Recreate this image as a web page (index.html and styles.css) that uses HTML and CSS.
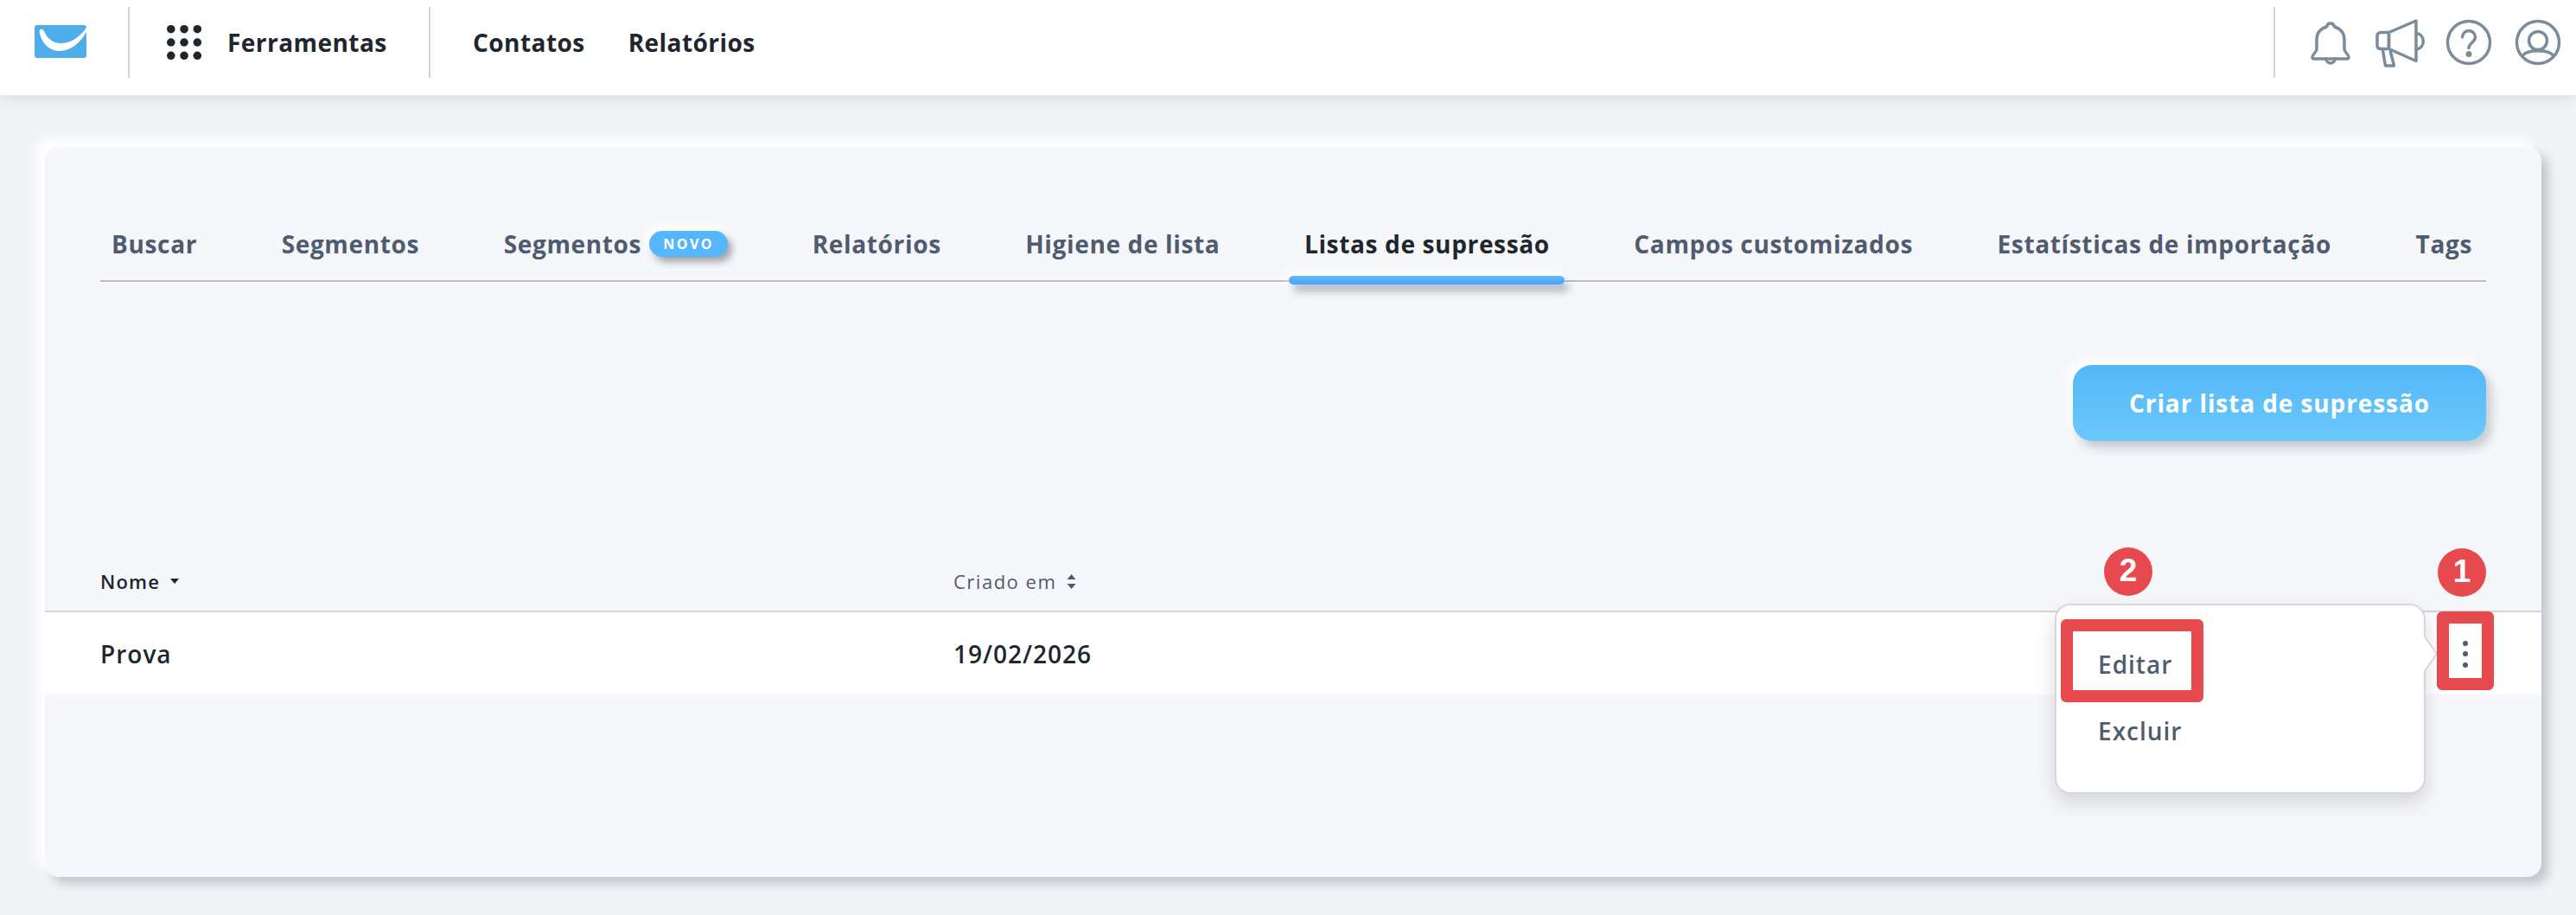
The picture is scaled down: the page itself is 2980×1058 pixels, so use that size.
FILE: index.html
```html
<!DOCTYPE html>
<html lang="pt-BR">
<head>
<meta charset="utf-8">
<title>Listas de supressão</title>
<link rel="stylesheet" href="styles.css">
</head>
<body>
<header class="topbar">
  <a class="logo-cell">
    <svg class="logo" viewBox="0 0 60 38"><rect width="60" height="38" rx="3" fill="#4fadec"/><path d="M5.700 8C8 22 18 30 29 30 42 30 53 20 60 8V3C52 14 42 21 30 21 20 21 14 14 10.700 6.500 9 3.500 5 4.500 5.700 8Z" fill="#fff"/></svg>
  </a>
  <div class="tools-cell">
    <svg class="grid-icon" viewBox="0 0 44 42"><g fill="#20262e"><circle cx="5" cy="5" r="5"/><circle cx="21" cy="5" r="5"/><circle cx="37" cy="5" r="5"/><circle cx="5" cy="21" r="5"/><circle cx="21" cy="21" r="5"/><circle cx="37" cy="21" r="5"/><circle cx="5" cy="37" r="5"/><circle cx="21" cy="37" r="5"/><circle cx="37" cy="37" r="5"/></g></svg>
    <span class="nav-label">Ferramentas</span>
  </div>
  <nav class="main-nav">
    <span class="nav-label">Contatos</span>
    <span class="nav-label">Relatórios</span>
  </nav>
  <div class="icons-cell">
    <svg class="ic ic-bell" viewBox="0 0 50 60"><path d="M25 5c-2.500 0-4 1.500-4.500 4C14 11 9 16 9 24v11c0 3-5 6-5 9 0 1.500 1 2 2 2h38c1 0 2-.5 2-2 0-3-5-6-5-9V24c0-8-5-13-11.500-15C29 6.500 27.500 5 25 5Z"/><path d="M20 46a5 5 0 0 0 10 0"/></svg>
    <svg class="ic ic-mega" viewBox="0 0 62 60"><path d="M17.500 17.500 49 4v46.500L17.500 36.500Z"/><path d="M17.500 17.500H8a4 4 0 0 0-4 4V33a4 4 0 0 0 4 3.500h9.500Z"/><path d="M10.500 38 13.500 56H23.500L19.500 40"/><path d="M50 18.500a9.500 9.500 0 0 1 0 18.500"/></svg>
    <svg class="ic ic-help" viewBox="0 0 56 56"><circle cx="28" cy="28" r="24.500"/><path d="M20.500 22a7.500 7.500 0 0 1 15 0c0 6-7.500 6.500-7.500 12.500"/><circle class="ic-fill" cx="28" cy="41.500" r="3.500"/></svg>
    <svg class="ic ic-user" viewBox="0 0 56 56"><circle cx="28" cy="28" r="24.500"/><circle cx="28" cy="26" r="10.500"/><path d="M10.500 43C16 36 40 36 45.500 43"/></svg>
  </div>
</header>

<main class="page">
  <section class="card">
    <div class="tabs">
      <span class="tab">Buscar</span>
      <span class="tab">Segmentos</span>
      <span class="tab tab-new">Segmentos<span class="badge-new">NOVO</span></span>
      <span class="tab">Relatórios</span>
      <span class="tab">Higiene de lista</span>
      <span class="tab tab-active">Listas de supressão</span>
      <span class="tab">Campos customizados</span>
      <span class="tab">Estatísticas de importação</span>
      <span class="tab">Tags</span>
    </div>

    <div class="actions">
      <button class="btn-primary">Criar lista de supressão</button>
    </div>

    <div class="table-head">
      <span class="th th-name">Nome
        <svg class="caret" viewBox="0 0 10 6"><path d="M0 0H10L5 6Z"/></svg>
      </span>
      <span class="th th-date">Criado em
        <svg class="sorter" viewBox="0 0 10 17"><path d="M5 0 10 6H0Z"/><path d="M0 11H10L5 17Z"/></svg>
      </span>
    </div>
    <div class="table-row">
      <span class="td">Prova</span>
      <span class="td">19/02/2026</span>
      <svg class="kebab" viewBox="0 0 8 32"><circle cx="4" cy="4" r="3"/><circle cx="4" cy="16" r="3"/><circle cx="4" cy="29" r="3"/></svg>
    </div>

    <div class="popover">
      <span class="menu-item">Editar</span>
      <span class="menu-item">Excluir</span>
      <svg class="popover-tip" viewBox="0 0 16 44"><path d="M0 1 15 22 0 43" /></svg>
    </div>

    <span class="step step-two">2</span>
    <span class="step step-one">1</span>
    <span class="mark mark-edit"></span>
    <span class="mark mark-kebab"></span>
  </section>
</main>
</body>
</html>
```

FILE: styles.css
```css
* { box-sizing: border-box; }
html, body { margin: 0; height: 100%; }
body {
  background: #f1f3f7;
  font-family: "Open Sans", "Noto Sans", sans-serif;
  color: #20262e;
  overflow: hidden;
}

/* Top bar */
.topbar {
  display: flex;
  align-items: center;
  height: 110px;
  padding: 8px 0 20px;
  background: #fff;
  box-shadow: 0 3px 16px rgba(40, 50, 70, 0.12);
  position: relative;
}
.logo-cell {
  display: flex;
  align-items: center;
  width: 150px;
  height: 82px;
  padding-left: 40px;
  border-right: 2px solid #d2d3d6;
}
.logo { width: 60px; height: 38px; margin-top: -2px; }
.tools-cell {
  display: flex;
  align-items: center;
  gap: 28px;
  width: 348px;
  height: 82px;
  padding-left: 43px;
  border-right: 2px solid #d2d3d6;
}
.grid-icon { width: 42px; height: 42px; }
.nav-label {
  font-size: 28px;
  font-weight: 700;
  letter-spacing: 0.45px;
  white-space: nowrap;
}
.main-nav { display: flex; gap: 50px; padding-left: 49px; }
.icons-cell {
  display: flex;
  align-items: flex-start;
  margin-left: auto;
  height: 82px;
  padding: 0 16px 0 39px;
  border-left: 2px solid #d2d3d6;
}
.ic {
  fill: none;
  stroke: #7b8d9c;
  stroke-width: 3.500;
  stroke-linejoin: round;
  stroke-linecap: round;
}
.ic-fill { fill: #7b8d9c; stroke: none; }
.ic-bell { width: 50px; height: 60px; margin-top: 14px; }
.ic-mega { width: 62px; height: 60px; margin-top: 12px; margin-left: 25px; }
.ic-help { width: 56px; height: 56px; margin-top: 13px; margin-left: 20px; }
.ic-user { width: 56px; height: 56px; margin-top: 13px; margin-left: 24px; }

/* Card */
.page { padding: 60px 40px 0 52px; }
.card {
  position: relative;
  height: 844px;
  padding-top: 98px;
  background: #f6f7fb;
  border-radius: 16px;
  box-shadow: -10px -10px 12px #fff, 8px 8px 12px rgba(150, 155, 165, 0.5);
}

/* Tabs */
.tabs {
  display: flex;
  justify-content: space-between;
  margin: 0 64px;
  height: 58px;
  padding: 0 16px 0 13px;
  border-bottom: 2px solid #bcbdc0;
  box-shadow: 0 2px 0 #fff;
}
.tab {
  position: relative;
  height: 44px;
  font-size: 28px;
  font-weight: 700;
  line-height: 28px;
  letter-spacing: 0.65px;
  color: #4f5b6e;
  white-space: nowrap;
}
.tab-new { display: flex; align-items: flex-start; }
.badge-new {
  display: block;
  width: 91px;
  height: 30px;
  margin: -1px 0 0 9px;
  border-radius: 15px;
  background: #56b6fb;
  box-shadow: 5px 6px 8px rgba(90, 95, 110, 0.55), -4px -5px 8px #fff;
  color: #fff;
  font-size: 16px;
  font-weight: 700;
  line-height: 30px;
  letter-spacing: 2.500px;
  text-align: center;
}
.tab-active { color: #20262e; }
.tab-active::after {
  content: "";
  position: absolute;
  left: -18px;
  right: -17px;
  top: 51px;
  height: 10px;
  border-radius: 5px;
  background: linear-gradient(#5cbcfb, #47a3f7);
  box-shadow: 5px 8px 10px rgba(90, 95, 110, 0.45), -4px -5px 8px #fff;
}

/* Action */
.actions {
  display: flex;
  justify-content: flex-end;
  padding: 96px 64px 0;
}
.btn-primary {
  width: 478px;
  height: 88px;
  border: 0;
  border-radius: 22px;
  background: linear-gradient(#54b7f9, #6bc8fa);
  box-shadow: 6px 8px 12px rgba(130, 135, 150, 0.4), -6px -6px 10px #fff;
  color: #fff;
  font-family: inherit;
  font-size: 28px;
  font-weight: 700;
  letter-spacing: 0.9px;
}

/* Table */
.table-head {
  display: grid;
  grid-template-columns: 987px 1fr;
  align-items: center;
  height: 198px;
  padding: 128px 64px 0;
  border-bottom: 2px solid #d4d5da;
}
.th {
  display: flex;
  align-items: center;
  gap: 12px;
  font-size: 22px;
  font-weight: 600;
  letter-spacing: 1.2px;
}
.th-date { color: #4f5b6e; font-weight: 500; letter-spacing: 1.500px; }
.caret { width: 10px; height: 6px; fill: #20262e; }
.sorter { width: 11px; height: 17px; fill: #4f5b6e; }
.table-row {
  display: grid;
  grid-template-columns: 987px 1fr auto;
  align-items: center;
  height: 95px;
  padding: 0 84px 0 64px;
  background: #fff;
}
.td {
  font-size: 28px;
  font-weight: 600;
  letter-spacing: 1px;
}
.kebab { width: 8px; height: 32px; fill: #4f5b6e; }

/* Popover */
.popover {
  position: absolute;
  left: 2325px;
  top: 528px;
  display: flex;
  flex-direction: column;
  width: 429px;
  height: 220px;
  padding: 30px 0 0 48px;
  background: #fff;
  border: 2px solid #d6d7dc;
  border-radius: 18px;
  box-shadow: 0 10px 22px rgba(120, 125, 140, 0.28);
}
.menu-item {
  height: 77px;
  font-size: 28px;
  font-weight: 600;
  line-height: 77px;
  letter-spacing: 1px;
  color: #4f5b6e;
}
.popover-tip {
  position: absolute;
  left: 425px;
  top: 34px;
  width: 16px;
  height: 44px;
  fill: #fff;
  stroke: #d6d7dc;
  stroke-width: 2;
}

/* Annotations */
.step {
  position: absolute;
  width: 56px;
  height: 56px;
  border-radius: 50%;
  background: #e64a4e;
  color: #fff;
  font-family: "Liberation Sans", Arial, sans-serif;
  font-size: 37px;
  font-weight: 700;
  line-height: 54px;
  text-align: center;
}
.step-two { left: 2382px; top: 463px; }
.step-one { left: 2768px; top: 464px; }
.mark {
  position: absolute;
  border: 14px solid #e64a4e;
  border-radius: 6px;
}
.mark-edit { left: 2332px; top: 546px; width: 165px; height: 96px; }
.mark-kebab { left: 2767px; top: 537px; width: 66px; height: 91px; }
```
